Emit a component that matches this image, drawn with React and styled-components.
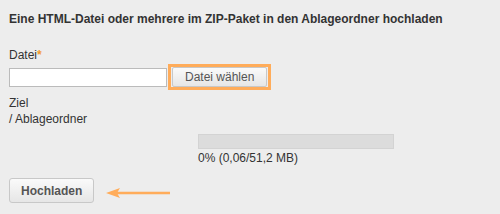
import React from "react";
import styled, { createGlobalStyle } from "styled-components";

const GlobalStyle = createGlobalStyle`
  html, body {
    margin: 0;
    padding: 0;
    background: #ededed;
  }
  body {
    font-family: "Liberation Sans", Arial, sans-serif;
    font-size: 12px;
    color: #333;
  }
`;

const Page = styled.div`
  width: 500px;
  height: 214px;
  box-sizing: border-box;
  padding: 12px 9px 0;
  display: flex;
  flex-direction: column;
`;

const Title = styled.h3`
  margin: 0;
  font-size: 12px;
  font-weight: 700;
  line-height: 14px;
  color: #333;
`;

const Label = styled.div`
  margin-top: 22px;
  line-height: 14px;
`;

const Star = styled.span`
  color: #f29a2e;
  font-weight: 700;
`;

const FileRow = styled.div`
  margin-top: 2px;
  display: flex;
  align-items: center;
  gap: 1px;
`;

const TextInput = styled.input`
  width: 158px;
  height: 19px;
  box-sizing: border-box;
  border: 1px solid #bbb;
  background: #fff;
  padding: 0 3px;
  margin: 0;
`;

const Highlight = styled.div`
  border: 3px solid #ffac5a;
  padding: 0 1px;
  display: flex;
`;

const Button = styled.button`
  font-family: "Liberation Sans", Arial, sans-serif;
  font-size: 12px;
  font-weight: ${(p) => (p.$bold ? 700 : 400)};
  color: #555;
  background: linear-gradient(#fafafa, #e6e6e6);
  border: 1px solid #c8c8c8;
  border-radius: ${(p) => (p.$bold ? "3px" : "2px")};
  padding: 0 ${(p) => (p.$bold ? "11px" : "12px")};
  height: ${(p) => (p.$bold ? "25px" : "20px")};
  cursor: pointer;
`;

const Field = styled.div`
  margin-top: 5px;
  line-height: 16px;
`;

const ProgressBlock = styled.div`
  margin-left: 189px;
  margin-top: 7px;
  display: flex;
  flex-direction: column;
  gap: 2px;
`;

const Bar = styled.div`
  width: 196px;
  height: 15px;
  box-sizing: border-box;
  border: 1px solid #d3d3d3;
  background: #dcdcdc;
`;

const Fill = styled.div`
  height: 100%;
  background: #9cc;
`;

const Footer = styled.div`
  margin-top: 13px;
  display: flex;
  align-items: center;
  gap: 12px;
`;

const Arrow = () => (
  <svg width="64" height="12" viewBox="0 0 64 12" style={{ marginTop: 4 }}>
    <path d="M8 6 H64" stroke="#ffac5a" strokeWidth="2.5" fill="none" />
    <path d="M0 6 L14 1 L11 6 L14 11 Z" fill="#ffac5a" />
  </svg>
);

export default function App() {
  const percent = 0;
  return (
    <>
      <GlobalStyle />
      <Page>
        <Title>Eine HTML-Datei oder mehrere im ZIP-Paket in den Ablageordner hochladen</Title>
        <Label>
          Datei<Star>*</Star>
        </Label>
        <FileRow>
          <TextInput type="text" readOnly />
          <Highlight>
            <Button type="button">Datei wählen</Button>
          </Highlight>
        </FileRow>
        <Field>
          Ziel
          <br />/ Ablageordner
        </Field>
        <ProgressBlock>
          <Bar>
            <Fill style={{ width: `${percent}%` }} />
          </Bar>
          <span>0% (0,06/51,2 MB)</span>
        </ProgressBlock>
        <Footer>
          <Button type="button" $bold>
            Hochladen
          </Button>
          <Arrow />
        </Footer>
      </Page>
    </>
  );
}
